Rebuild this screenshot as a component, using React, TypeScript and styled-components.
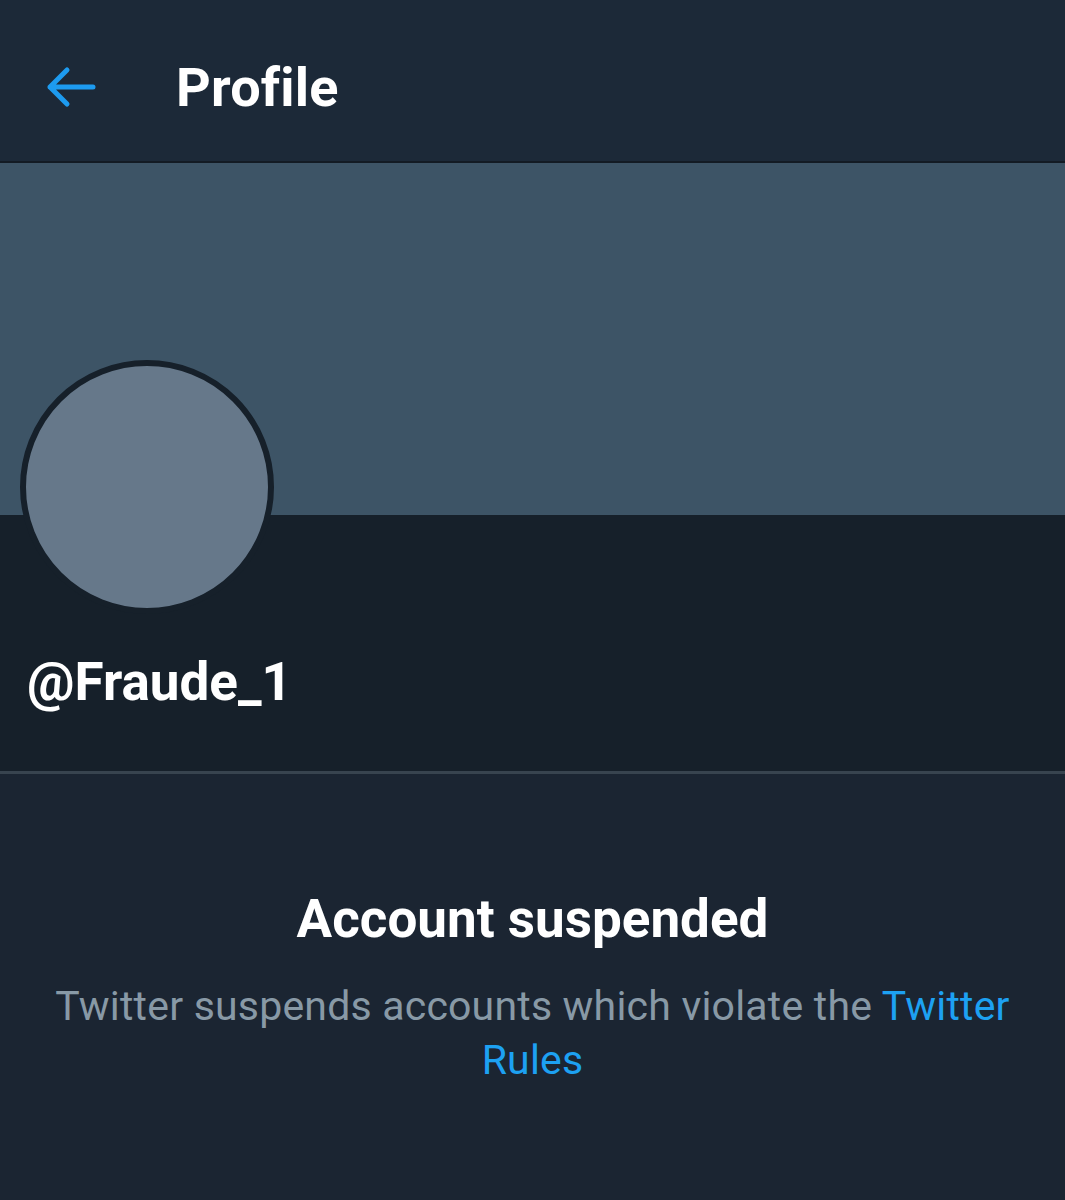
import React from "react";
import styled, { createGlobalStyle } from "styled-components";

const GlobalStyle = createGlobalStyle`
  body {
    margin: 0;
    background: #1b2532;
    font-family: Roboto, "Liberation Sans", sans-serif;
  }
`;

const Page = styled.div`
  width: 1065px;
  height: 1200px;
  display: flex;
  flex-direction: column;
  background: #1b2532;
  overflow: hidden;
`;

const Header = styled.header`
  height: 163px;
  flex-shrink: 0;
  display: flex;
  align-items: center;
  gap: 78px;
  padding-left: 46px;
  padding-top: 14px;
  box-sizing: border-box;
  background: #1c2938;
  border-bottom: 2px solid #131b24;
`;

const BackButton = styled.button`
  display: flex;
  align-items: center;
  padding: 0;
  border: none;
  background: none;
  color: #1d9bf0;
  margin-top: -2px;
`;

const Title = styled.h1`
  margin: 0;
  color: #ffffff;
  font-size: 54px;
  font-weight: 700;
  letter-spacing: 0.2px;
`;

const Banner = styled.div`
  height: 352px;
  flex-shrink: 0;
  background: #3d5466;
`;

const Info = styled.section`
  height: 256px;
  flex-shrink: 0;
  background: #16202a;
  padding-left: 20px;
  display: flex;
  flex-direction: column;
`;

const Avatar = styled.div`
  width: 242px;
  height: 242px;
  margin-top: -155px;
  border-radius: 50%;
  background: #66788a;
  border: 6px solid #16202a;
`;

const Handle = styled.div`
  margin-top: 38px;
  margin-left: 7px;
  color: #ffffff;
  font-size: 53px;
  font-weight: 700;
  line-height: 60px;
`;

const Divider = styled.hr`
  margin: 0;
  border: none;
  height: 3px;
  flex-shrink: 0;
  background: #38444f;
`;

const Notice = styled.section`
  flex: 1;
  display: flex;
  flex-direction: column;
  align-items: center;
  padding: 115px 40px 0;
  text-align: center;
`;

const NoticeTitle = styled.h2`
  margin: 0;
  color: #ffffff;
  font-size: 53px;
  font-weight: 700;
  line-height: 60px;
`;

const NoticeText = styled.p`
  margin: 30px 0 0;
  color: #8899a6;
  font-size: 41px;
  letter-spacing: 0.2px;
  line-height: 54px;
  max-width: 985px;
`;

const Link = styled.a`
  color: #1da1f2;
  text-decoration: none;
`;

const BackArrow = () => (
  <svg width="52" height="44" viewBox="0 0 52 44" fill="none">
    <path
      d="M47 22H4M21 5L4 22l17 17"
      stroke="currentColor"
      strokeWidth="5"
      strokeLinecap="round"
      strokeLinejoin="round"
    />
  </svg>
);

const App = () => {
  return (
    <>
      <GlobalStyle />
      <Page>
        <Header>
          <BackButton aria-label="Back">
            <BackArrow />
          </BackButton>
          <Title>Profile</Title>
        </Header>
        <Banner />
        <Info>
          <Avatar />
          <Handle>@Fraude_1</Handle>
        </Info>
        <Divider />
        <Notice>
          <NoticeTitle>Account suspended</NoticeTitle>
          <NoticeText>
            Twitter suspends accounts which violate the{" "}
            <Link href="#">Twitter Rules</Link>
          </NoticeText>
        </Notice>
      </Page>
    </>
  );
};

export default App;
